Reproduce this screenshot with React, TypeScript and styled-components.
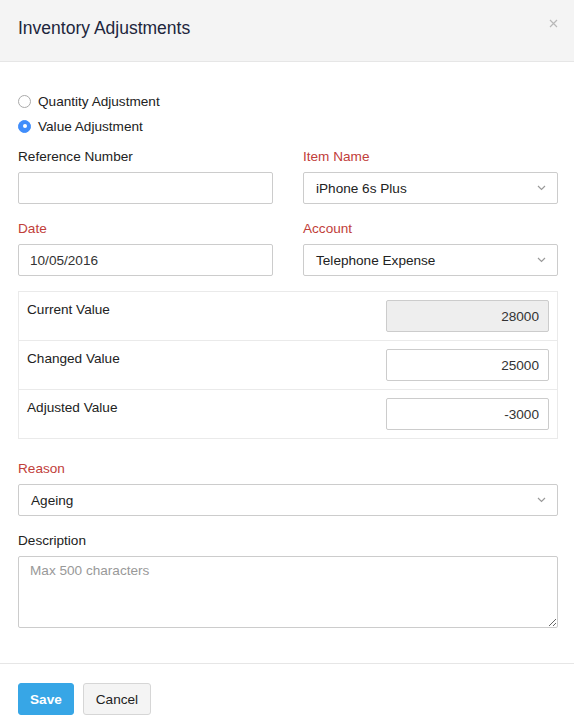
import React from 'react';
import styled, { createGlobalStyle } from 'styled-components';

const GlobalStyle = createGlobalStyle`
  * { box-sizing: border-box; }
  body {
    margin: 0;
    background: #fff;
    font-family: 'Liberation Sans', Arial, sans-serif;
    color: #222;
  }
`;

const Modal = styled.div`
  width: 574px;
  background: #fff;
`;

// --------------- header ---------------
const Header = styled.header`
  height: 62px;
  padding: 0 18px;
  background: #f4f4f4;
  border-bottom: 1px solid #e6e6e6;
  display: flex;
  align-items: center;
  justify-content: space-between;

  h1 {
    margin: 0 0 4px;
    font-size: 17.5px;
    font-weight: 400;
    color: #21263c;
  }
`;

const Close = styled.button`
  border: none;
  background: none;
  padding: 0;
  margin: 0 -2px 14px 0;
  color: #b8b8b8;
  display: flex;
`;

// --------------- body ---------------
const Body = styled.div`
  padding: 29px 16px 35px 18px;
  font-size: 13.6px;
`;

const RadioGroup = styled.div`
  display: flex;
  flex-direction: column;
  gap: 5px;
  margin-bottom: 11px;
`;

const RadioRow = styled.label`
  display: flex;
  align-items: center;
  gap: 7px;
  height: 20px;
  color: #222;
`;

const RadioDot = styled.span<{ checked?: boolean }>`
  width: 13px;
  height: 13px;
  border-radius: 50%;
  border: 1px solid ${(p) => (p.checked ? '#408dfb' : '#aaa')};
  background: ${(p) => (p.checked ? '#408dfb' : '#fff')};
  display: flex;
  align-items: center;
  justify-content: center;

  &::after {
    content: '';
    display: ${(p) => (p.checked ? 'block' : 'none')};
    width: 4px;
    height: 4px;
    border-radius: 50%;
    background: #fff;
  }
`;

const Grid = styled.div`
  display: grid;
  grid-template-columns: 255px 255px;
  column-gap: 30px;
  row-gap: 15px;
  margin-bottom: 15px;
`;

const Field = styled.div`
  display: flex;
  flex-direction: column;
  gap: 7px;
`;

const Label = styled.label<{ required?: boolean }>`
  line-height: 18px;
  padding-top: 1px;
  margin-bottom: -1px;
  color: ${(p) => (p.required ? '#c1403a' : '#222')};
`;

const Input = styled.input<{ align?: 'left' | 'right'; readOnlyLook?: boolean }>`
  height: 32px;
  width: 100%;
  border: 1px solid #ccc;
  border-radius: 2px;
  padding: 0 ${(p) => (p.align === 'right' ? '9px' : '11px')};
  font: inherit;
  color: #333;
  text-align: ${(p) => p.align || 'left'};
  background: ${(p) => (p.readOnlyLook ? '#eee' : '#fff')};
  outline: none;
`;

const Select = styled.div`
  height: 32px;
  border: 1px solid #ccc;
  border-radius: 2px;
  padding: 0 12px;
  display: flex;
  align-items: center;
  justify-content: space-between;
  color: #222;
  background: #fff;

  svg {
    color: #9a9a9a;
    margin-right: -1px;
  }
`;

const ValueTable = styled.div`
  border: 1px solid #eaeaea;
  margin-bottom: 20px;
`;

const ValueRow = styled.div`
  height: 48px;
  padding: 8px 8px 0 8px;
  display: flex;
  justify-content: space-between;
  align-items: flex-start;

  & + & {
    border-top: 1px solid #eaeaea;
    height: 49px;
  }

  span {
    line-height: 18px;
    padding-top: 1px;
    color: #222;
  }

  input {
    width: 163px;
  }
`;

const Stack = styled.div`
  display: flex;
  flex-direction: column;
  gap: 15px;
`;

const TextArea = styled.textarea`
  height: 72px;
  width: 100%;
  border: 1px solid #ccc;
  border-radius: 2px;
  padding: 6px 11px;
  font: inherit;
  resize: vertical;
  outline: none;

  &::placeholder {
    color: #999;
  }
`;

// --------------- footer ---------------
const Footer = styled.footer`
  border-top: 1px solid #e6e6e6;
  padding: 19px 18px;
  display: flex;
  gap: 9px;
`;

const Button = styled.button<{ primary?: boolean }>`
  height: 32px;
  padding: 0 ${(p) => (p.primary ? '11px' : '12px')};
  border-radius: 3px;
  font-family: inherit;
  font-size: 13.6px;
  font-weight: ${(p) => (p.primary ? 700 : 400)};
  color: ${(p) => (p.primary ? '#fff' : '#222')};
  background: ${(p) => (p.primary ? '#37a6e6' : '#f4f4f4')};
  border: 1px solid ${(p) => (p.primary ? '#37a6e6' : '#d6d6d6')};
`;

const Chevron = () => (
  <svg width="9" height="6" viewBox="0 0 9 6" fill="none">
    <path d="M1 1l3.5 3.5L8 1" stroke="currentColor" strokeWidth="1.2" />
  </svg>
);

const CloseIcon = () => (
  <svg width="9" height="9" viewBox="0 0 9 9">
    <path d="M1 1l7 7M8 1L1 8" stroke="currentColor" strokeWidth="1.2" />
  </svg>
);

export default function App() {
  return (
    <Modal>
      <GlobalStyle />
      <Header>
        <h1>Inventory Adjustments</h1>
        <Close aria-label="close">
          <CloseIcon />
        </Close>
      </Header>

      <Body>
        <RadioGroup>
          <RadioRow>
            <RadioDot />
            Quantity Adjustment
          </RadioRow>
          <RadioRow>
            <RadioDot checked />
            Value Adjustment
          </RadioRow>
        </RadioGroup>

        <Grid>
          <Field>
            <Label>Reference Number</Label>
            <Input />
          </Field>
          <Field>
            <Label required>Item Name</Label>
            <Select>
              iPhone 6s Plus
              <Chevron />
            </Select>
          </Field>
          <Field>
            <Label required>Date</Label>
            <Input defaultValue="10/05/2016" />
          </Field>
          <Field>
            <Label required>Account</Label>
            <Select>
              Telephone Expense
              <Chevron />
            </Select>
          </Field>
        </Grid>

        <ValueTable>
          <ValueRow>
            <span>Current Value</span>
            <Input align="right" readOnlyLook readOnly defaultValue="28000" />
          </ValueRow>
          <ValueRow>
            <span>Changed Value</span>
            <Input align="right" defaultValue="25000" />
          </ValueRow>
          <ValueRow>
            <span>Adjusted Value</span>
            <Input align="right" defaultValue="-3000" />
          </ValueRow>
        </ValueTable>

        <Stack>
          <Field>
            <Label required>Reason</Label>
            <Select>
              Ageing
              <Chevron />
            </Select>
          </Field>
          <Field>
            <Label>Description</Label>
            <TextArea placeholder="Max 500 characters" />
          </Field>
        </Stack>
      </Body>

      <Footer>
        <Button primary>Save</Button>
        <Button>Cancel</Button>
      </Footer>
    </Modal>
  );
}
